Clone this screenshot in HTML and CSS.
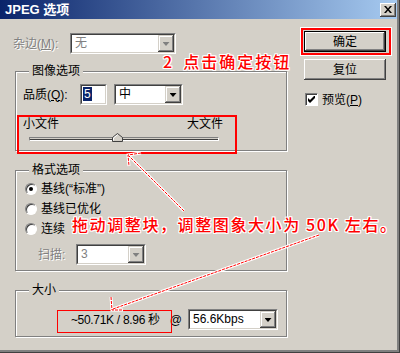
FILE: index.html
```html
<!DOCTYPE html>
<html lang="zh-CN">
<head>
  <meta charset="UTF-8" />
  <title>JPEG 选项</title>
  <link rel="stylesheet" href="styles.css">
</head>
<body>
<div class="win">
  <div class="titlebar">
    <span class="title">JPEG 选项</span>
    <span class="close">
      <svg width="8" height="7" viewBox="0 0 8 7"><path d="M0 0h2l2 2.5 2-2.5h2l-3 3.5 3 3.5h-2l-2-2.5-2 2.5h-2l3-3.5z" fill="#000"/></svg>
    </span>
  </div>

  <div class="content">
    <div class="main">
      <div class="row matte">
        <span class="lbl disabled" style="width:57px">杂边(<u>M</u>):</span>
        <div class="select w-matte">
          <div class="inner"><span class="val disabled-val">无</span><span class="drop off"><i></i></span></div>
        </div>
      </div>

      <div class="group g-image">
        <span class="group-title">图像选项</span>
        <div class="row">
          <span class="lbl" style="width:57px">品质(<u>Q</u>):</span>
          <div class="select w-num">
            <div class="inner"><span class="val"><span class="hl">5</span></span></div>
          </div>
          <div class="select w-quality">
            <div class="inner"><span class="val">中</span><span class="drop"><i></i></span></div>
          </div>
        </div>
        <div class="slider">
          <div class="slider-labels"><span>小文件</span><span>大文件</span></div>
          <div class="track">
            <svg class="thumb" width="11" height="9" viewBox="0 0 11 9">
              <path d="M5.5 0.5L10.5 4.5V8.5H0.5V4.5Z" fill="#d4d0c8" stroke="#404040"/>
              <path d="M1.5 7.5V5L5.5 1.8" fill="none" stroke="#fff"/>
            </svg>
          </div>
        </div>
      </div>

      <div class="group g-format">
        <span class="group-title">格式选项</span>
        <div class="radio-row"><span class="radio on"></span>基线(“标准”)</div>
        <div class="radio-row"><span class="radio"></span>基线已优化</div>
        <div class="radio-row"><span class="radio"></span>连续</div>
        <div class="row scan">
          <span class="lbl disabled" style="width:38px">扫描:</span>
          <div class="select w-scan">
            <div class="inner"><span class="val disabled-val">3</span><span class="drop off"><i></i></span></div>
          </div>
        </div>
      </div>

      <div class="group g-size">
        <span class="group-title">大小</span>
        <div class="row size-row">
          <span class="size-text">~50.71K / 8.96 秒</span>
          <span class="at">@</span>
          <div class="select w-rate">
            <div class="inner"><span class="val">56.6Kbps</span><span class="drop"><i></i></span></div>
          </div>
        </div>
      </div>
    </div>

    <div class="side">
      <button class="btn default">确定</button>
      <button class="btn">复位</button>
      <label class="check">
        <span class="box"><svg width="7" height="7" viewBox="0 0 7 7"><path d="M0 2v3l2 2 5-5v-3l-5 5z" fill="#000"/></svg></span>
        预览(<u>P</u>)
      </label>
    </div>
  </div>

  <!-- annotations drawn over the dialog -->
  <div class="notes">
    <div class="mark mark-ok"></div>
    <div class="mark mark-slider"></div>
    <div class="mark mark-size"></div>
    <svg class="arrows" width="400" height="353" viewBox="0 0 400 353">
      <g fill="none" stroke="#fff" stroke-width="3">
        <path d="M184 211L129 156"/><path d="M141 153L128 155L129 166"/>
        <path d="M319 235L113 309"/><path d="M111 297L112 310L123 310"/>
      </g>
      <g fill="none" stroke="#f00" stroke-width="1" stroke-dasharray="3 1">
        <path d="M184 211L129 156"/><path d="M141 153L128 155L129 166"/>
        <path d="M319 235L113 309"/><path d="M111 297L112 310L123 310"/>
      </g>
    </svg>
    <div class="say say-ok"><span class="num">2</span>点击确定按钮</div>
    <div class="say say-drag">拖动调整块，调整图象大小为 50K 左右。</div>
  </div>
</div>
</body>
</html>
```

FILE: styles.css
```css
* { box-sizing: border-box; }
body { margin: 0; background: #d4d0c8; font: 12px/14px "Liberation Sans", "Noto Sans CJK SC", sans-serif; color: #000; }
u { text-decoration: underline; }

.win { position: relative; width: 400px; height: 353px; background: #d4d0c8; box-shadow: inset -1px -1px #404040, inset -3px -3px #808080; }

.titlebar { display: flex; align-items: center; height: 19px; margin-right: 3px; padding-left: 5px; background: linear-gradient(to right, #0a246a, #a6caf0); }
.title { flex: 1; color: #fff; font-weight: bold; font-size: 13px; }
.close { display: flex; align-items: center; justify-content: center; width: 16px; height: 14px; margin-right: 1px; background: #d4d0c8; box-shadow: inset -1px -1px #404040, inset 1px 1px #fff, inset -2px -2px #808080; }

.content { display: flex; padding: 12px 0 0 13px; }
.main { width: 275px; padding-top: 2px; }
.side { display: flex; flex-direction: column; width: 82px; margin-left: 16px; }

.row { display: flex; align-items: center; height: 21px; }
.lbl { flex: none; }
.disabled { color: #808080; text-shadow: 1px 1px #fff; }

.select { flex: none; height: 21px; border: 1px solid; border-color: #808080 #fff #fff #808080; }
.select .inner { display: flex; height: 100%; border: 1px solid; border-color: #404040 #d4d0c8 #d4d0c8 #404040; background: #fff; }
.val { flex: 1; padding-left: 3px; line-height: 17px; white-space: nowrap; overflow: hidden; }
.disabled-val { color: #808080; }
.hl { background: #0a246a; color: #fff; padding: 0 1px; }
.drop { display: flex; align-items: center; justify-content: center; width: 16px; background: #d4d0c8; box-shadow: inset -1px -1px #404040, inset 1px 1px #d4d0c8, inset -2px -2px #808080, inset 2px 2px #fff; }
.drop i { width: 7px; height: 4px; background: #000; clip-path: polygon(0 0, 100% 0, 50% 100%); margin-top: 1px; }
.drop.off i { background: #808080; }

.w-matte { width: 106px; }
.w-num { width: 27px; }
.w-num .val { padding-left: 1px; }
.w-quality { width: 69px; margin-left: 7px; }
.w-scan { width: 70px; }
.w-rate { width: 90px; }

.group { position: relative; margin-left: 2px; width: 272px; border: 1px solid #808080; box-shadow: 1px 1px #fff, inset 1px 1px #fff; }
.group-title { position: absolute; top: -8px; left: 13px; padding: 0 3px; background: #d4d0c8; line-height: 14px; }

.g-image { margin-top: 17px; height: 80px; padding: 12px 0 0 7px; }
.slider { width: 200px; margin-top: 12px; }
.slider-labels { display: flex; justify-content: space-between; height: 14px; }
.track { position: relative; height: 4px; margin: 6px 4px 0 6px; border: 1px solid; border-color: #808080 #fff #fff #808080; background: #404040; box-shadow: inset 0 1px #d4d0c8; }
.thumb { position: absolute; left: 82px; top: -5px; }

.g-format { margin-top: 19px; height: 101px; padding: 8px 0 0 9px; }
.radio-row { display: flex; align-items: center; height: 20px; }
.radio { display: flex; align-items: center; justify-content: center; width: 12px; height: 12px; margin-right: 4px; border-radius: 50%; background: #fff; border: 1px solid; border-color: #808080 #fff #fff #808080; box-shadow: inset 1px 1px #404040; }
.radio.on::after { content: ""; width: 4px; height: 4px; border-radius: 50%; background: #000; }
.scan { margin-top: 5px; padding-left: 13px; }

.g-size { margin-top: 19px; height: 47px; padding: 18px 8px 0 0; }
.size-row { justify-content: flex-end; }
.size-text { margin-right: 10px; letter-spacing: -0.3px; }
.at { margin-right: 6px; }

.btn { width: 82px; height: 21px; padding: 0; border: 0; font: inherit; color: #000; background: #d4d0c8; box-shadow: inset -1px -1px #404040, inset 1px 1px #fff, inset -2px -2px #808080; }
.btn.default { border: 1px solid #000; }
.btn + .btn { margin-top: 7px; }
.check { display: flex; align-items: center; height: 13px; margin: 13px 0 0 1px; }
.box { display: flex; align-items: center; justify-content: center; width: 13px; height: 13px; margin-right: 4px; background: #fff; border: 1px solid; border-color: #808080 #fff #fff #808080; box-shadow: inset 1px 1px #404040; }

.notes { position: absolute; left: 0; top: 0; width: 400px; height: 353px; pointer-events: none; }
.arrows { position: absolute; left: 0; top: 0; }
.mark { position: absolute; border: 2px solid #f00; }
.mark-ok { left: 301px; top: 28px; width: 90px; height: 27px; outline: 1px solid #fff; }
.mark-slider { left: 17px; top: 115px; width: 220px; height: 39px; }
.mark-size { left: 57px; top: 310px; width: 115px; height: 23px; border-width: 1px; }
.say { position: absolute; color: #f00; font: 500 16px/18px "Noto Sans CJK SC", sans-serif; letter-spacing: 2px; white-space: nowrap;
  text-shadow: 1px 0 #fff, -1px 0 #fff, 0 1px #fff, 0 -1px #fff, 1px 1px #fff, -1px -1px #fff, 1px -1px #fff, -1px 1px #fff; }
.say .num { margin-right: 9px; }
.say-ok { left: 163px; top: 52px; }
.say-drag { left: 72px; top: 215px; letter-spacing: 1.6px; }
```
